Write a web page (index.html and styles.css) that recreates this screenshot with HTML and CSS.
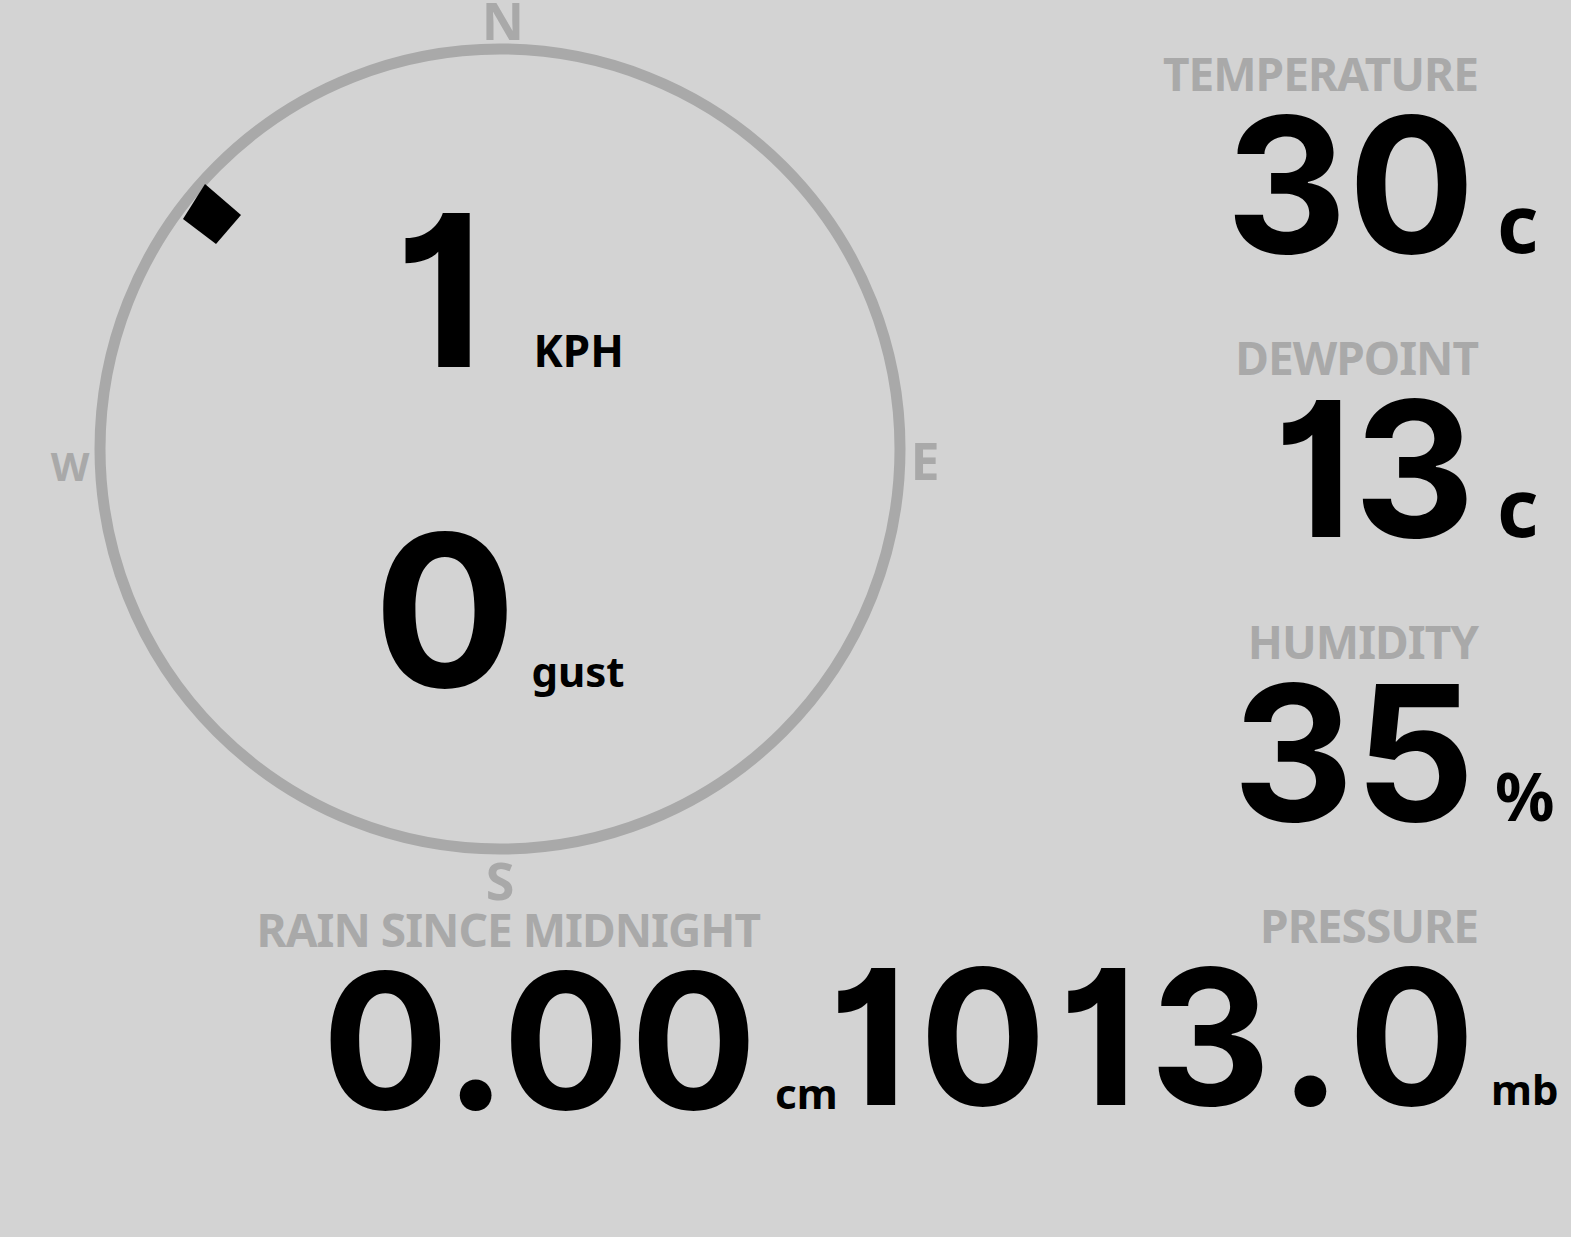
FILE: index.html
```html
<!DOCTYPE html>
<html lang="en">
<head>
    <meta charset="UTF-8">
    <meta name="viewport" content="width=device-width, initial-scale=1.0">
    <title>Weather</title>
    <link rel="stylesheet" href="styles.css">
</head>
<body>
    <main class="board">
        <!-- wind dial -->
        <section class="dial">
            <svg class="dial-face" width="1000" height="906" viewBox="0 0 1000 906">
                <circle cx="500" cy="449" r="400" fill="none" stroke="#a9a9a9" stroke-width="11"/>
                <polygon points="205,184 241,215 216,244 183,219" fill="#000"/>
                <text class="compass" x="503" y="40">N</text>
                <text class="compass" x="925" y="480">E</text>
                <text class="compass" x="500" y="900">S</text>
                <text class="compass compass-w" x="70" y="481">W</text>
            </svg>
            <div class="readouts">
                <div class="reading">1<span class="unit unit-kph">KPH</span></div>
                <div class="reading reading-gust">0<span class="unit">gust</span></div>
            </div>
        </section>

        <section class="stats">
            <div class="stat">
                <div class="label">TEMPERATURE</div>
                <div class="value">30<span class="unit unit-c">c</span></div>
            </div>
            <div class="stat">
                <div class="label">DEWPOINT</div>
                <div class="value">13<span class="unit unit-c">c</span></div>
            </div>
            <div class="stat">
                <div class="label">HUMIDITY</div>
                <div class="value">35<span class="unit unit-pct">%</span></div>
            </div>
            <div class="stat">
                <div class="label">PRESSURE</div>
                <div class="value value-wide">1013.0<span class="unit unit-mb">mb</span></div>
            </div>
        </section>

        <section class="stat rain">
            <div class="label">RAIN SINCE MIDNIGHT</div>
            <div class="value">0.00<span class="unit unit-cm">cm</span></div>
        </section>
    </main>
</body>
</html>
```

FILE: styles.css
```css
body {
    margin: 0;
    background-color: #d3d3d3;
    font-family: "Noto Sans", "Open Sans", sans-serif;
    font-weight: 700;
    color: #000;
    overflow: hidden;
}
.board {
    display: grid;
    grid-template-columns: 1000px minmax(0, 1fr);
    grid-template-rows: 906px auto;
    padding-right: 96px;
    height: 1237px;
    box-sizing: border-box;
}
.dial {
    position: relative;
    grid-column: 1;
    grid-row: 1;
}
.dial-face {
    position: absolute;
    top: 0;
    left: 0;
    overflow: visible;
}
.compass {
    font-family: "Noto Sans", sans-serif;
    font-weight: 700;
    font-size: 52px;
    fill: #a9a9a9;
    text-anchor: middle;
}
.compass-w {
    font-size: 40px;
}
.readouts {
    position: relative;
    display: flex;
    flex-direction: column;
    align-items: center;
    gap: 100px;
    padding-top: 180px;
    padding-left: 18px;
}
.reading {
    font-family: Inter, "Noto Sans", sans-serif;
    font-feature-settings: "cv01";
    font-size: 212px;
    line-height: 220px;
    height: 220px;
    white-space: nowrap;
}
.reading-gust {
    margin-left: -20px;
}
.reading .unit {
    display: inline-block;
    font-family: "Noto Sans", sans-serif;
    font-feature-settings: normal;
    font-size: 42px;
    line-height: 1;
    margin-left: 15px;
}
.reading .unit-kph {
    font-size: 44px;
    margin-left: 50px;
}
.stats {
    grid-column: 2;
    grid-row: 1 / 3;
    display: flex;
    flex-direction: column;
    align-items: flex-end;
    gap: 78px;
    padding-top: 50px;
}
.stat {
    display: flex;
    flex-direction: column;
    align-items: flex-end;
}
.label {
    font-size: 46px;
    line-height: 46px;
    letter-spacing: -1px;
    margin-right: -3px;
    color: #a9a9a9;
    white-space: nowrap;
}
.value {
    font-family: Inter, "Noto Sans", sans-serif;
    font-feature-settings: "cv01";
    font-size: 188px;
    line-height: 178px;
    letter-spacing: 1px;
    margin-right: -1px;
    height: 160px;
    white-space: nowrap;
}
.value-wide {
    letter-spacing: 12px;
    margin-right: -12px;
}
.value .unit {
    display: inline-block;
    width: 0;
    font-family: "Noto Sans", sans-serif;
    font-feature-settings: normal;
    font-size: 42px;
    line-height: 1;
    letter-spacing: 0;
}
.value .unit-c {
    font-size: 80px;
    margin-left: 21px;
    margin-right: -21px;
}
.value .unit-pct {
    font-size: 66px;
    margin-left: 19px;
    margin-right: -19px;
}
.value .unit-mb {
    margin-left: 4px;
    margin-right: -4px;
}
.value .unit-cm {
    margin-left: 17px;
    margin-right: -17px;
}
.rain {
    grid-column: 1;
    grid-row: 2;
    justify-self: end;
    margin-right: 243px;
}
```
